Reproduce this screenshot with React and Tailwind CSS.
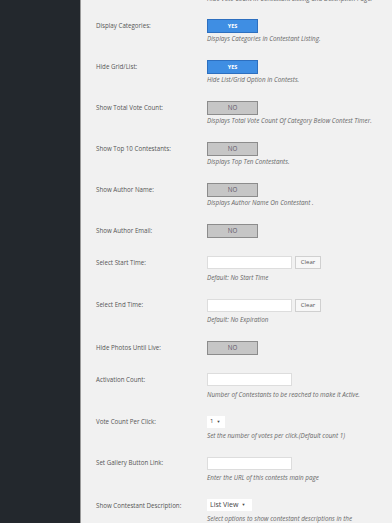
import React from 'react';

const label = "w-[111px] shrink-0 h-[14px] flex items-center text-[6.2px] text-[#555] leading-none";
const desc = "text-[6.3px] italic text-[#666] leading-[10px] h-[10px] whitespace-nowrap";

const Toggle = ({ on }) =>
  on ? (
    <div className="w-[51px] h-[14px] bg-[#3f8ee3] border border-[#2d6fbf] flex items-center justify-center text-[5.5px] font-bold text-white">
      YES
    </div>
  ) : (
    <div className="w-[51px] h-[14px] bg-[#c6c6c6] border border-[#8c8c8c] flex items-center justify-center text-[6.2px] text-[#5f5566]">
      NO
    </div>
  );

const ToggleRow = ({ name, on, note }) => (
  <div className={`flex items-start pt-[8px] ${note ? 'pb-[8px]' : 'pb-[10px]'}`}>
    <div className={label}>{name}</div>
    <div>
      <Toggle on={on} />
      {note && <div className={`${desc} mt-[1px]`}>{note}</div>}
    </div>
  </div>
);

const TextInput = () => (
  <div className="w-[85px] h-[13px] bg-white border border-[#dddddd]" />
);

const InputRow = ({ name, note, clear }) => (
  <div className="flex items-start pt-[8px] pb-[8px]">
    <div className={label}>{name}</div>
    <div>
      <div className="flex items-center gap-[3px]">
        <TextInput />
        {clear && (
          <div className="w-[26px] h-[13px] bg-[#f7f7f7] border border-[#d0d0d0] flex items-center justify-center text-[6px] text-[#555]">
            Clear
          </div>
        )}
      </div>
      <div className={`${desc} mt-[3.5px]`}>{note}</div>
    </div>
  </div>
);

const SelectRow = ({ name, value, width, note, big }) => (
  <div className="flex items-start pt-[8px] pb-[8px]">
    <div className={label}>{name}</div>
    <div>
      <div className={`${width} h-[12px] bg-white flex items-center pl-[3px] gap-[3px] ${big ? 'text-[7px]' : 'text-[6px]'} text-[#444]`}>
        <span>{value}</span>
        <span className="text-[4px]">▼</span>
      </div>
      <div className={`${desc} mt-[3px]`}>{note}</div>
    </div>
  </div>
);

export default function App() {
  return (
    <div className="flex h-[523px] overflow-hidden font-['Open_Sans',sans-serif]">
      <aside className="w-[80px] shrink-0 bg-[#23282d]" />
      <main className="flex-1 bg-[#f1f1f1] border-l border-[#9a9a9a] pl-[15px] overflow-hidden">
        <div className="flex -mt-[6px] pb-[7px]">
          <div className="w-[111px] shrink-0" />
          <div className={desc}>Hide Vote Count in Contestant Listing and Description Page.</div>
        </div>
        <ToggleRow name="Display Categories:" on note="Displays Categories in Contestant Listing." />
        <ToggleRow name="Hide Grid/List:" on note="Hide List/Grid Option in Contests." />
        <ToggleRow name="Show Total Vote Count:" note="Displays Total Vote Count Of Category Below Contest Timer." />
        <ToggleRow name="Show Top 10 Contestants:" note="Displays Top Ten Contestants." />
        <ToggleRow name="Show Author Name:" note="Displays Author Name On Contestant ." />
        <ToggleRow name="Show Author Email:" />
        <InputRow name="Select Start Time:" clear note="Default: No Start Time" />
        <InputRow name="Select End Time:" clear note="Default: No Expiration" />
        <ToggleRow name="Hide Photos Until Live:" />
        <InputRow name="Activation Count:" note="Number of Contestants to be reached to make it Active." />
        <SelectRow name="Vote Count Per Click:" value="1" width="w-[18px]" note="Set the number of votes per click.(Default count 1)" />
        <InputRow name="Set Gallery Button Link:" note="Enter the URL of this contests main page" />
        <SelectRow name="Show Contestant Description:" value="List View" width="w-[45px]" big note="Select options to show contestant descriptions in the" />
      </main>
    </div>
  );
}
